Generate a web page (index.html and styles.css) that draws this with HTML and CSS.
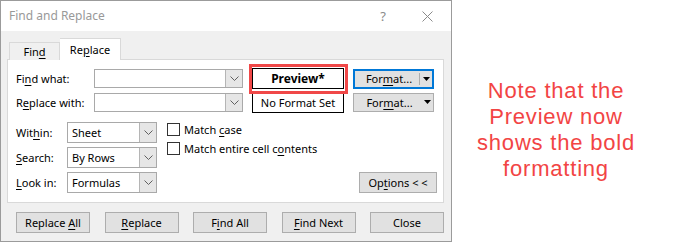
FILE: index.html
```html
<!DOCTYPE html>
<html lang="en">
<head>
    <meta charset="UTF-8">
    <title>Find and Replace</title>
    <link rel="stylesheet" href="styles.css">
</head>
<body>
    <div class="page">
        <div class="dialog">
            <div class="titlebar">
                <span class="title">Find and Replace</span>
                <span class="help">?</span>
                <span class="close-x">
                    <svg width="11" height="11" viewBox="0 0 11 11"><path d="M0.5 0.5 L10.5 10.5 M10.5 0.5 L0.5 10.5" stroke="#8a8a8a" stroke-width="1" fill="none"/></svg>
                </span>
            </div>

            <div class="body">
                <div class="tabs">
                    <div class="tab">Fin<u>d</u></div>
                    <div class="tab active">Re<u>p</u>lace</div>
                </div>

                <div class="panel">
                    <div class="top">
                        <label class="lbl">Fi<u>n</u>d what:</label>
                        <div class="combo">
                            <span class="combo-text"></span>
                            <span class="combo-arrow"><svg width="9" height="5" viewBox="0 0 9 5"><path d="M0.5 0.5 L4.5 4.5 L8.5 0.5" stroke="#606060" fill="none"/></svg></span>
                        </div>
                        <div class="preview bold">Preview*</div>
                        <div class="btn split focus">
                            <span class="split-main">For<u>m</u>at...</span>
                            <span class="split-arrow"><svg width="7" height="4" viewBox="0 0 7 4"><path d="M0 0 H7 L3.5 4 Z" fill="#000"/></svg></span>
                        </div>

                        <label class="lbl">R<u>e</u>place with:</label>
                        <div class="combo">
                            <span class="combo-text"></span>
                            <span class="combo-arrow"><svg width="9" height="5" viewBox="0 0 9 5"><path d="M0.5 0.5 L4.5 4.5 L8.5 0.5" stroke="#606060" fill="none"/></svg></span>
                        </div>
                        <div class="preview">No Format Set</div>
                        <div class="btn split">
                            <span class="split-main">For<u>m</u>at...</span>
                            <span class="split-arrow"><svg width="7" height="4" viewBox="0 0 7 4"><path d="M0 0 H7 L3.5 4 Z" fill="#000"/></svg></span>
                        </div>

                        <!-- annotation round the preview box -->
                        <div class="highlight"></div>
                    </div>

                    <div class="mid">
                        <div class="fields">
                            <label class="lbl">Wit<u>h</u>in:</label>
                            <div class="select">
                                <span class="combo-text">Sheet</span>
                                <span class="combo-arrow"><svg width="9" height="5" viewBox="0 0 9 5"><path d="M0.5 0.5 L4.5 4.5 L8.5 0.5" stroke="#606060" fill="none"/></svg></span>
                            </div>
                            <label class="lbl"><u>S</u>earch:</label>
                            <div class="select">
                                <span class="combo-text">By Rows</span>
                                <span class="combo-arrow"><svg width="9" height="5" viewBox="0 0 9 5"><path d="M0.5 0.5 L4.5 4.5 L8.5 0.5" stroke="#606060" fill="none"/></svg></span>
                            </div>
                            <label class="lbl"><u>L</u>ook in:</label>
                            <div class="select">
                                <span class="combo-text">Formulas</span>
                                <span class="combo-arrow"><svg width="9" height="5" viewBox="0 0 9 5"><path d="M0.5 0.5 L4.5 4.5 L8.5 0.5" stroke="#606060" fill="none"/></svg></span>
                            </div>
                        </div>

                        <div class="checks">
                            <div class="check"><span class="box"></span><span>Match <u>c</u>ase</span></div>
                            <div class="check"><span class="box"></span><span>Match entire cell c<u>o</u>ntents</span></div>
                        </div>

                        <div class="options-wrap">
                            <div class="btn options">Op<u>t</u>ions &lt; &lt;</div>
                        </div>
                    </div>
                </div>

                <div class="actions">
                    <div class="btn">Replace <u>A</u>ll</div>
                    <div class="btn"><u>R</u>eplace</div>
                    <div class="btn">F<u>i</u>nd All</div>
                    <div class="btn"><u>F</u>ind Next</div>
                    <div class="btn">Close</div>
                </div>
            </div>
        </div>

        <div class="note">Note that the<br>Preview now<br>shows the bold<br>formatting</div>
    </div>
</body>
</html>
```

FILE: styles.css
```css
body {
    margin: 0;
    background-color: #fff;
    font-family: "Noto Sans", "Open Sans", sans-serif;
    font-size: 11px;
    color: #000;
}

.page {
    display: flex;
    width: 673px;
    height: 243px;
}

u {
    text-underline-offset: 2px;
}

/* dialog window */
.dialog {
    width: 452px;
    height: 242px;
    box-sizing: border-box;
    border: 1px solid #9b9b9b;
    background-color: #f0f0f0;
    display: flex;
    flex-direction: column;
}

.titlebar {
    height: 30px;
    background-color: #fff;
    display: flex;
    align-items: center;
    padding-left: 8px;
    color: #999;
}

.title {
    flex: 1;
    font-size: 12px;
    margin-top: -1px;
}

.help {
    font-size: 13px;
    color: #8a8a8a;
    margin-right: 36px;
}

.close-x {
    display: flex;
    margin-right: 18px;
}

.body {
    padding: 7px 7px 0 6px;
}

/* tabs */
.tabs {
    display: flex;
    align-items: flex-end;
    padding-left: 2px;
    margin-bottom: -1px;
    position: relative;
    z-index: 1;
}

.tab {
    height: 18px;
    width: 51px;
    box-sizing: border-box;
    border: 1px solid #d9d9d9;
    border-bottom: none;
    text-align: center;
    line-height: 17px;
    background-color: #f0f0f0;
}

.tab.active {
    height: 22px;
    width: 61px;
    background-color: #fff;
    border-left: none;
    line-height: 22px;
}

.panel {
    background-color: #fff;
    border: 1px solid #d9d9d9;
    height: 144px;
    box-sizing: border-box;
    padding: 8px 6px 0 8px;
}

/* top rows */
.top {
    display: grid;
    grid-template-columns: 78px 149px 101px 90px;
    grid-template-rows: 21px 20px;
    row-gap: 3px;
    align-items: center;
    position: relative;
}

.top .preview {
    margin-left: 9px;
}

.top .btn {
    margin-left: 9px;
}

.lbl {
    white-space: nowrap;
}

.combo,
.select {
    display: flex;
    height: 19px;
    box-sizing: border-box;
    border: 1px solid #a9a9a9;
    background-color: #fff;
}

.select {
    height: 21px;
}

.combo-text {
    flex: 1;
    padding-left: 4px;
    line-height: 18px;
}

.select .combo-text {
    line-height: 19px;
}

.combo-arrow {
    width: 16px;
    display: flex;
    align-items: center;
    justify-content: center;
    background-color: #e6e6e6;
    border-left: 1px solid #b5b5b5;
}

.preview {
    height: 21px;
    box-sizing: border-box;
    border: 1px solid #000;
    text-align: center;
    line-height: 19px;
    background-color: #fff;
}

.preview.bold {
    font-weight: bold;
    font-size: 12px;
}

.highlight {
    position: absolute;
    left: 233px;
    top: -4px;
    width: 99px;
    height: 30px;
    box-sizing: border-box;
    border: 3px solid #f04848;
}

/* buttons */
.btn {
    height: 21px;
    box-sizing: border-box;
    border: 1px solid #adadad;
    background-color: #e1e1e1;
    text-align: center;
    line-height: 19px;
    white-space: nowrap;
}

.split {
    display: flex;
    height: 19px;
    line-height: 17px;
}

.split.focus {
    border: 2px solid #0078d7;
    height: 20px;
    line-height: 16px;
}

.split-main {
    flex: 1;
    text-align: center;
    padding-left: 4px;
}

.split-arrow {
    width: 12px;
    display: flex;
    align-items: center;
    justify-content: center;
}

.split.focus .split-arrow {
    border-left: 1px solid #adadad;
    margin: 2px 0;
}

/* middle rows */
.mid {
    display: flex;
    margin-top: 10px;
}

.fields {
    display: grid;
    grid-template-columns: 51px 90px;
    grid-template-rows: 21px 21px 21px;
    row-gap: 4px;
    align-items: center;
}

.checks {
    display: flex;
    flex-direction: column;
    gap: 6px;
    margin-left: 10px;
    margin-top: 1px;
}

.check {
    display: flex;
    align-items: center;
    height: 13px;
    white-space: nowrap;
}

.box {
    width: 13px;
    height: 13px;
    box-sizing: border-box;
    border: 1px solid #333;
    background-color: #fff;
    margin-right: 4px;
}

.options-wrap {
    flex: 1;
    display: flex;
    justify-content: flex-end;
    align-items: flex-end;
}

.options {
    width: 78px;
}

/* bottom buttons */
.actions {
    display: flex;
    justify-content: space-between;
    padding: 9px 0 0 9px;
}

.actions .btn {
    width: 74px;
}

/* annotation */
.note {
    flex: 1;
    padding-top: 78px;
    padding-right: 13px;
    text-align: center;
    font-family: "Liberation Sans", Arial, sans-serif;
    font-size: 22px;
    letter-spacing: 0.8px;
    line-height: 26px;
    color: #f24444;
}
```
